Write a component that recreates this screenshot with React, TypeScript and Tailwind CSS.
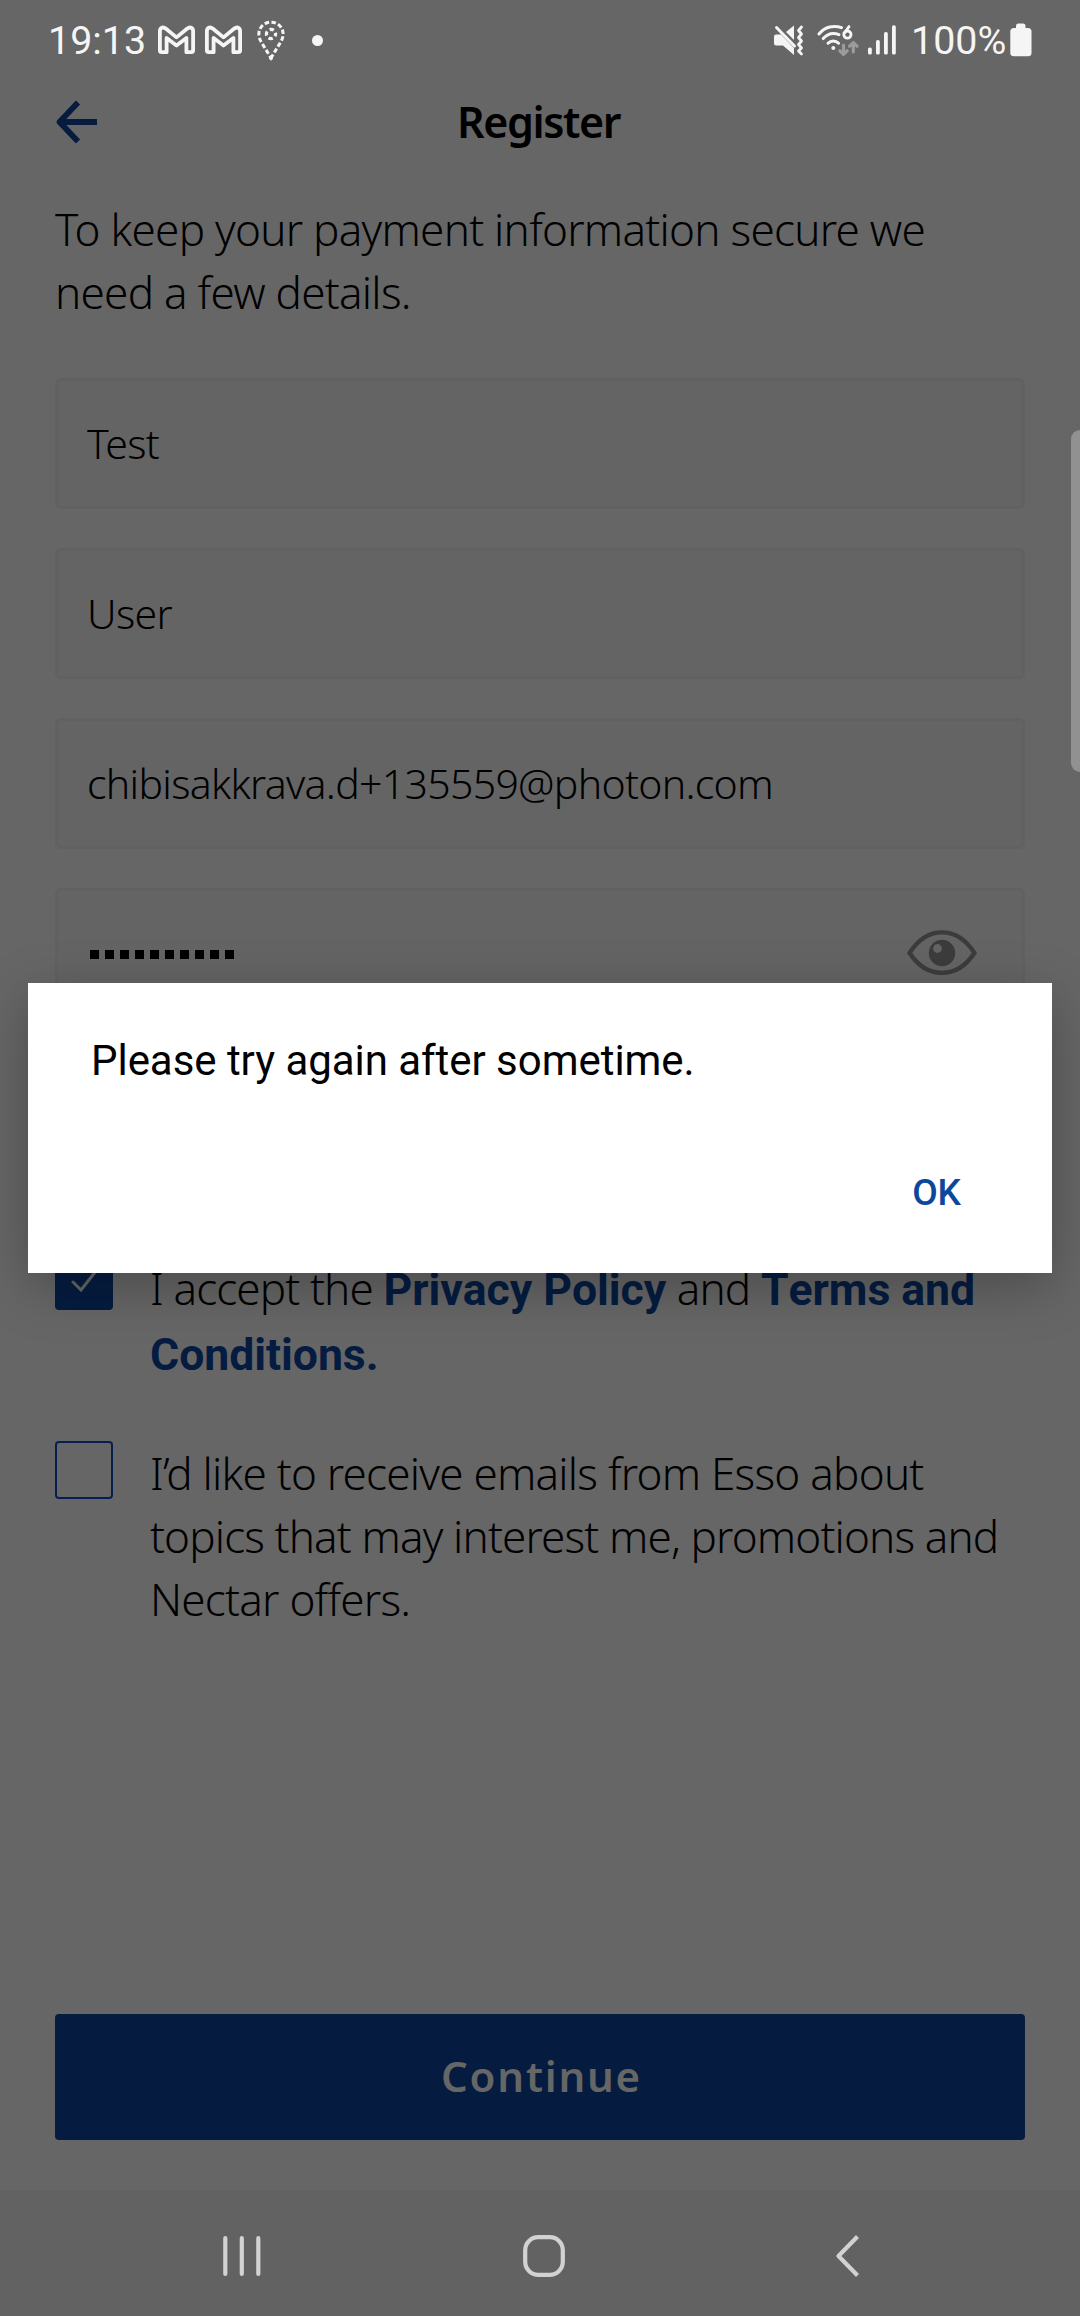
import React from "react";

const light = "font-['Noto_Sans',sans-serif] font-[330]";
const link = "font-[Roboto,sans-serif] text-[44.6px] font-bold leading-none tracking-[-0.05px] text-[#051c40] [font-kerning:none]";

function GmailIcon() {
  return (
    <svg width="37" height="30" viewBox="0 0 37 30" fill="none" stroke="#f5f5f5" strokeWidth="3.8" strokeLinejoin="round">
      <path d="M4.2 2.6 Q1.9 3.4 1.9 6 V25.5 Q1.9 27.2 3.8 27.2 H8.6 V13 L18.5 20.5 L28.4 13 V27.2 H33.2 Q35.1 27.2 35.1 25.5 V6 Q35.1 3.4 32.8 2.6 Q31 2.2 29 3.8 L18.5 12.4 L8 3.8 Q6 2.2 4.2 2.6 Z" />
    </svg>
  );
}

function PinIcon() {
  return (
    <svg width="28" height="41" viewBox="0 0 28 41" fill="none" stroke="#f5f5f5">
      <path d="M14 38 L4 21.5 C-2 11 5.5 2.2 14 2.2 C22.5 2.2 30 11 24 21.5 Z" strokeWidth="3" strokeDasharray="4.6 2.3" strokeDashoffset="2" />
      <circle cx="14" cy="14" r="4.6" strokeWidth="3.2" strokeDasharray="4.4 2.82" strokeDashoffset="2" />
      <circle cx="14" cy="38" r="2" fill="#f5f5f5" stroke="none" />
    </svg>
  );
}

function MuteVibrateIcon() {
  return (
    <svg width="31" height="31" viewBox="0 0 31 31" fill="none">
      <path d="M1 11.5 Q1 9.5 3 9.5 H8 L21 23 V30 L10 20.5 H3 Q1 20.5 1 18.5 Z" fill="#f5f5f5" />
      <path d="M13 7 L21 0.5 V15 Z" fill="#f5f5f5" />
      <path d="M3.5 2.5 L21.5 21" stroke="#f5f5f5" strokeWidth="3" strokeLinecap="round" />
      <path d="M28.5 2 L25.5 5.5 L28.5 9 L25.5 12.5 L28.5 16 L25.5 19.5 L28.5 23 L25.5 26 L28.5 29" stroke="#f5f5f5" strokeWidth="2.8" strokeLinecap="round" strokeLinejoin="round" />
    </svg>
  );
}

function WifiIcon() {
  return (
    <svg width="42" height="33" viewBox="0 0 42 33" fill="none" stroke="#f5f5f5" strokeWidth="3" strokeLinecap="round">
      <path d="M2 10 C8 2.5 17 1 24.5 3.6" />
      <path d="M6.2 14.6 C10.5 9.6 16.5 8.6 22 10.6" />
      <path d="M11 19.2 C14 16.2 18.6 16.2 21.6 19.2" />
      <circle cx="16.3" cy="24" r="2" fill="#f5f5f5" stroke="none" />
      <path d="M32 2.6 L27.4 9" strokeWidth="2.8" />
      <circle cx="30.4" cy="10.6" r="3.6" strokeWidth="2.8" />
      <g stroke="#9b9b9b" strokeWidth="3.2" strokeLinejoin="round">
        <path d="M26.5 21 V30 M22.8 26.8 L26.5 30.4 L30.2 26.8" />
        <path d="M36.3 28 V19 M32.6 22.2 L36.3 18.6 L40 22.2" />
      </g>
    </svg>
  );
}

function SignalIcon() {
  return (
    <svg width="28" height="30" viewBox="0 0 28 30" fill="#f5f5f5">
      <rect x="0" y="22.5" width="3.8" height="7" rx="1.6" />
      <rect x="8" y="15" width="3.8" height="14.5" rx="1.6" />
      <rect x="16" y="7" width="3.8" height="22.5" rx="1.6" />
      <rect x="24" y="0.3" width="3.8" height="29.2" rx="1.6" />
    </svg>
  );
}

function BatteryIcon() {
  return (
    <svg width="22" height="34" viewBox="0 0 22 34" fill="#f5f5f5">
      <path d="M6 3 Q6 0.5 8.5 0.5 H13 Q15.5 0.5 15.5 3 V5 H18 Q21.5 5 21.5 8.5 V30 Q21.5 33.3 18 33.3 H4 Q0.3 33.3 0.3 30 V8.5 Q0.3 5 4 5 H6 Z" />
    </svg>
  );
}

function EyeIcon() {
  return (
    <svg className="mb-[2px]" width="70" height="46" viewBox="0 0 70 46" fill="none">
      <path d="M2.6 23 C20 -4.5 50 -4.5 67.4 23 C50 49.5 20 49.5 2.6 23 Z" stroke="#3c3c3c" strokeWidth="4.4" />
      <circle cx="35" cy="23" r="13.2" fill="#3c3c3c" />
      <circle cx="30.5" cy="18.5" r="4.4" fill="#646464" />
    </svg>
  );
}

function StatusBar() {
  return (
    <header className="flex h-20 items-center justify-between pl-[48px] pr-12 font-[Roboto,sans-serif] text-[39.4px] leading-[40px] text-[#f5f5f5]">
      <div className="flex items-center">
        <span className="w-[110px] whitespace-nowrap pt-[2px]">19:13</span>
        <GmailIcon />
        <span className="w-[10px]" />
        <GmailIcon />
        <span className="ml-[15px]"><PinIcon /></span>
        <span className="ml-[27px] size-[11px] rounded-full bg-[#f5f5f5]" />
      </div>
      <div className="flex items-center">
        <MuteVibrateIcon />
        <span className="ml-[13px]"><WifiIcon /></span>
        <span className="ml-[9px]"><SignalIcon /></span>
        <span className="ml-[15px] w-[99px] whitespace-nowrap pt-[2px]">100%</span>
        <BatteryIcon />
      </div>
    </header>
  );
}

function Field({ children }: { children: React.ReactNode }) {
  return (
    <div className={`flex h-[131px] items-center justify-between rounded-md border-[3px] border-[#616161] bg-[#646464] pl-[29px] pr-[45px] text-[41px] leading-[60px] tracking-[-0.69px] text-black ${light}`}>
      {children}
    </div>
  );
}

export default function App() {
  return (
    <div className="relative flex h-[2316px] w-[1080px] flex-col overflow-hidden bg-[#666666] text-black">
      <StatusBar />

      <div className="flex h-[84px] items-center px-[55px]">
        <svg width="43" height="44" viewBox="0 0 43 44" fill="none" stroke="#051c40" strokeWidth="5.8">
          <path d="M42 22 H5 M23 2.5 L4.5 22 L23 41.5" strokeLinejoin="round" />
        </svg>
        <h1 className="mr-[46px] flex-1 text-center font-['Noto_Sans',sans-serif] text-[43px] font-semibold leading-[60px] tracking-[-1.4px]">Register</h1>
      </div>

      <main className="flex flex-1 flex-col px-[55px] pt-[34px]">
        <p className={`whitespace-nowrap text-[44px] leading-[63px] tracking-[-0.72px] ${light}`}>
          To keep your payment information secure we
          <br />
          need a few details.
        </p>

        <form className="mt-[54px] flex flex-col gap-[39px]">
          <Field><span className="pb-[2px]">Test</span></Field>
          <Field><span className="pb-[2px]">User</span></Field>
          <Field><span className="pb-[2px]">chibisakkrava.d+135559@photon.com</span></Field>
          <Field>
            <span className="flex gap-[6px] pl-[3px] pt-[2px]">
              {Array.from({ length: 10 }, (_, i) => (
                <i key={i} className="size-[9px] bg-black" />
              ))}
            </span>
            <EyeIcon />
          </Field>
        </form>

        <div className="mt-[233px] flex gap-[37px]">
          <span className="flex size-[58px] shrink-0 items-center justify-center rounded bg-[#051c40]">
            <svg width="28" height="24" viewBox="0 0 28 24" fill="none" stroke="#666666" strokeWidth="3" strokeLinecap="round">
              <path d="M3 13 L11 21 L26 2" />
            </svg>
          </span>
          <p className={`whitespace-nowrap pt-[4px] text-[44px] leading-[65px] tracking-[-0.85px] ${light}`}>
            I accept the <b className={link}>Privacy Policy</b> and{" "}
            <b className={link}>
              Terms and
              <br />
              Conditions.
            </b>
          </p>
        </div>

        <div className="mt-[55px] flex gap-[37px]">
          <span className="size-[58px] shrink-0 rounded border-2 border-[#052050]" />
          <p className={`whitespace-nowrap pt-px text-[44px] leading-[63px] tracking-[-0.75px] ${light}`}>
            I’d like to receive emails from Esso about
            <br />
            <span className="tracking-[-0.85px]">topics that may interest me, promotions and</span>
            <br />
            Nectar offers.
          </p>
        </div>

        <button className="mb-[50px] mt-auto h-[126px] rounded bg-[#051c40] pb-[3px] pl-[3px] font-['Noto_Sans',sans-serif] text-[42px] font-semibold tracking-[1.8px] text-[#666666]">
          Continue
        </button>
      </main>

      <nav className="flex h-[126px] items-center justify-between bg-[#626262] pl-[222px] pr-[220px] pt-[6px]">
        <svg width="40" height="44" viewBox="0 0 40 44" stroke="#d2d2d2" strokeWidth="4.2" strokeLinecap="round">
          <path d="M3.3 4.2 V40 M19.8 4.2 V40 M36.3 4.2 V40" />
        </svg>
        <svg className="mr-[8px]" width="44" height="44" viewBox="0 0 44 44" fill="none" stroke="#d2d2d2" strokeWidth="4.2">
          <rect x="3.2" y="3.2" width="37.6" height="37.6" rx="13" />
        </svg>
        <svg width="26" height="44" viewBox="0 0 26 44" fill="none" stroke="#d2d2d2" strokeWidth="4.2">
          <path d="M23.5 2.5 L4.5 22 L23.5 41.5" strokeLinejoin="round" />
        </svg>
      </nav>

      <span className="absolute right-0 top-[430px] h-[342px] w-[9px] rounded-l-[9px] bg-[#919191]" />

      <div role="alertdialog" className="absolute left-[28px] top-[983px] flex h-[290px] w-[1024px] flex-col justify-between bg-white pb-[54px] pl-[63px] pr-[91px] pt-[48px] font-[Roboto,sans-serif] shadow-[0_14px_50px_rgba(0,0,0,0.26)]">
        <p className="whitespace-nowrap text-[42px] leading-[60px] tracking-[-0.04px]">Please try again after sometime.</p>
        <button className="self-end text-[37px] font-medium leading-[52px] text-[#0c479d]">OK</button>
      </div>
    </div>
  );
}
